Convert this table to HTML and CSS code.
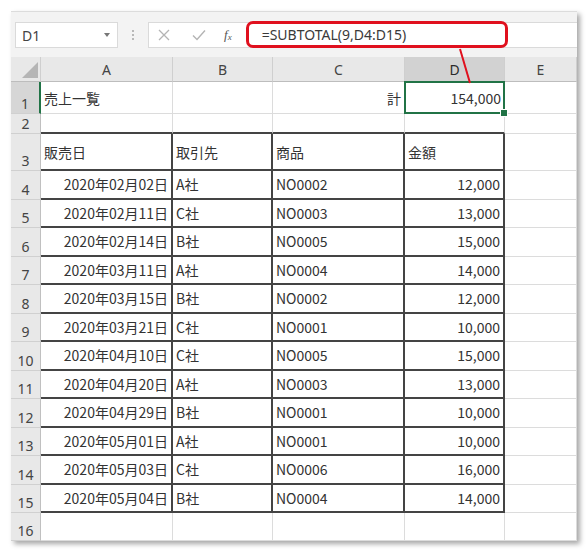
FILE: index.html
```html
<!DOCTYPE html>
<html>
<head>
<meta charset="utf-8">
<link rel="stylesheet" href="styles.css">
</head>
<body>
<div class="sheet">
  <div class="fbar">
    <div class="namebox"><span class="nb-text">D1</span><span class="nb-arrow"></span></div>
    <div class="dots"><i></i><i></i><i></i></div>
    <div class="formula">
      <svg class="ico-x" width="12" height="12" viewBox="0 0 12 12"><path d="M1 1L11 11M11 1L1 11" stroke="#b4b4b4" stroke-width="1.3" fill="none"/></svg>
      <svg class="ico-ok" width="14" height="12" viewBox="0 0 14 12"><path d="M1 6.5L5 10.5L13 1.5" stroke="#b4b4b4" stroke-width="1.4" fill="none"/></svg>
      <span class="fx"><i>f</i><sub>x</sub></span>
      <div class="ftext">=SUBTOTAL(9,D4:D15)</div>
    </div>
  </div>
  <div class="grid">
    <div class="corner"><span class="tri"></span></div>
    <div class="ch">A</div><div class="ch">B</div><div class="ch">C</div><div class="ch sel">D</div><div class="ch">E</div>

    <div class="rh rsel">1</div>
    <div class="c">売上一覧</div><div class="c"></div><div class="c r">計</div><div class="c r d1">154,000</div><div class="c"></div>

    <div class="rh">2</div>
    <div class="c tb"></div><div class="c tb"></div><div class="c tb"></div><div class="c tb"></div><div class="c"></div>

    <div class="rh">3</div>
    <div class="c t">販売日</div><div class="c t">取引先</div><div class="c t">商品</div><div class="c t">金額</div><div class="c"></div>

    <div class="rh">4</div><div class="c t r">2020年02月02日</div><div class="c t">A社</div><div class="c t">NO0002</div><div class="c t r">12,000</div><div class="c"></div>
    <div class="rh">5</div><div class="c t r">2020年02月11日</div><div class="c t">C社</div><div class="c t">NO0003</div><div class="c t r">13,000</div><div class="c"></div>
    <div class="rh">6</div><div class="c t r">2020年02月14日</div><div class="c t">B社</div><div class="c t">NO0005</div><div class="c t r">15,000</div><div class="c"></div>
    <div class="rh">7</div><div class="c t r">2020年03月11日</div><div class="c t">A社</div><div class="c t">NO0004</div><div class="c t r">14,000</div><div class="c"></div>
    <div class="rh">8</div><div class="c t r">2020年03月15日</div><div class="c t">B社</div><div class="c t">NO0002</div><div class="c t r">12,000</div><div class="c"></div>
    <div class="rh">9</div><div class="c t r">2020年03月21日</div><div class="c t">C社</div><div class="c t">NO0001</div><div class="c t r">10,000</div><div class="c"></div>
    <div class="rh">10</div><div class="c t r">2020年04月10日</div><div class="c t">C社</div><div class="c t">NO0005</div><div class="c t r">15,000</div><div class="c"></div>
    <div class="rh">11</div><div class="c t r">2020年04月20日</div><div class="c t">A社</div><div class="c t">NO0003</div><div class="c t r">13,000</div><div class="c"></div>
    <div class="rh">12</div><div class="c t r">2020年04月29日</div><div class="c t">B社</div><div class="c t">NO0001</div><div class="c t r">10,000</div><div class="c"></div>
    <div class="rh">13</div><div class="c t r">2020年05月01日</div><div class="c t">A社</div><div class="c t">NO0001</div><div class="c t r">10,000</div><div class="c"></div>
    <div class="rh">14</div><div class="c t r">2020年05月03日</div><div class="c t">C社</div><div class="c t">NO0006</div><div class="c t r">16,000</div><div class="c"></div>
    <div class="rh">15</div><div class="c t r">2020年05月04日</div><div class="c t">B社</div><div class="c t">NO0004</div><div class="c t r">14,000</div><div class="c"></div>

    <div class="rh">16</div><div class="c"></div><div class="c"></div><div class="c"></div><div class="c"></div><div class="c"></div>
  </div>
  <svg class="callout" width="567" height="100" viewBox="0 0 567 100"><line x1="449" y1="37" x2="459" y2="71" stroke="#e0101e" stroke-width="2"/></svg>
</div>
</body>
</html>
```

FILE: styles.css
```css
* { box-sizing: border-box; }
html, body { margin: 0; padding: 0; background: #ffffff; }
body { width: 588px; height: 553px; overflow: hidden; font-family: "Noto Sans CJK JP", "Noto Sans", sans-serif; }

.sheet {
  position: relative;
  margin: 11px 0 0 11px;
  width: 566px;
  background: #fff;
  box-shadow: 3px 3px 5px rgba(0,0,0,0.35);
  border-top: 1px solid #dcdcdc;
}

.fbar {
  height: 45px;
  background: #f3f3f3;
  display: flex;
  align-items: flex-start;
  padding: 10px 0 0 4px;
}
.namebox {
  width: 103px;
  height: 26px;
  background: #fff;
  border: 1px solid #dadada;
  display: flex;
  align-items: center;
  justify-content: space-between;
  padding: 0 5px 0 6px;
}
.nb-text { font-family: "Noto Sans", sans-serif; font-size: 14px; color: #444; }
.nb-arrow {
  width: 0; height: 0;
  border-left: 3px solid transparent;
  border-right: 3px solid transparent;
  border-top: 4px solid #777;
  margin-right: 2px;
}
.dots {
  width: 30px;
  height: 26px;
  display: flex;
  flex-direction: column;
  align-items: center;
  justify-content: center;
  gap: 2px;
}
.dots i { width: 2px; height: 2px; background: #b8b8b8; display: block; }
.formula {
  flex: 1;
  height: 26px;
  background: #fff;
  border: 1px solid #dadada;
  border-right: none;
  display: flex;
  align-items: center;
  padding-left: 9px;
}
.ico-x { margin-right: 22px; }
.ico-ok { margin-right: 18px; }
.fx {
  font-family: "Liberation Serif", serif;
  font-style: italic;
  font-size: 13px;
  color: #555;
  margin-right: 14px;
}
.fx i { font-style: italic; }
.fx sub { font-size: 9px; vertical-align: -1px; }
.ftext {
  height: 27px;
  width: 262px;
  margin-top: -1px;
  border: 3px solid #e0101e;
  border-radius: 7px;
  display: flex;
  align-items: center;
  padding-left: 13px;
  font-family: "Noto Sans", sans-serif;
  font-size: 14px;
  color: #3a3a3a;
  background: #fff;
}

.grid {
  display: grid;
  grid-template-columns: 30px 132px 100px 132px 100px 72px;
  grid-template-rows: 25px 32px 20px 37px repeat(12, 28.5px) 28px;
  font-size: 14px;
  color: #333;
}
.corner {
  background: #e8e8e8;
  border-right: 1px solid #cfcfcf;
  border-bottom: 1px solid #bdbdbd;
  position: relative;
}
.tri {
  position: absolute;
  right: 2px;
  bottom: 3px;
  width: 0; height: 0;
  border-left: 16px solid transparent;
  border-bottom: 16px solid #b5b5b5;
}
.ch {
  background: #e8e8e8;
  border-right: 1px solid #cfcfcf;
  border-bottom: 1px solid #bdbdbd;
  display: flex;
  align-items: center;
  justify-content: center;
  font-family: "Noto Sans", sans-serif;
  font-size: 14px;
  color: #444;
}
.ch.sel { background: #d2d2d2; color: #2a2a2a; }
.rh {
  background: #e8e8e8;
  border-right: 1px solid #c0c0c0;
  border-bottom: 1px solid #d0d0d0;
  display: flex;
  align-items: flex-end;
  justify-content: center;
  padding-bottom: 2px;
  font-family: "Noto Sans", sans-serif;
  font-size: 14px;
  color: #444;
  line-height: 1;
}
.rh.rsel { background: #d6d6d6; border-right: 2px solid #217346; }
.c {
  border-right: 1px solid #dcdcdc;
  border-bottom: 1px solid #dcdcdc;
  display: flex;
  align-items: center;
  padding: 0 3px;
  white-space: nowrap;
}
.c.r { justify-content: flex-end; }
.c.t { border-right: 2px solid #444; border-bottom: 2px solid #444; }
.c.tb { border-bottom: 2px solid #444; }
.d1 {
  position: relative;
}
.d1::after {
  content: "";
  position: absolute;
  left: -1px; top: -1px; right: -1px; bottom: -1px;
  border: 2px solid #217346;
}
.d1::before {
  content: "";
  position: absolute;
  right: -4px; bottom: -4px;
  width: 6px; height: 6px;
  background: #217346;
  border: 1px solid #fff;
  z-index: 2;
}
.callout {
  position: absolute;
  left: 0; top: 0;
  pointer-events: none;
}
```
